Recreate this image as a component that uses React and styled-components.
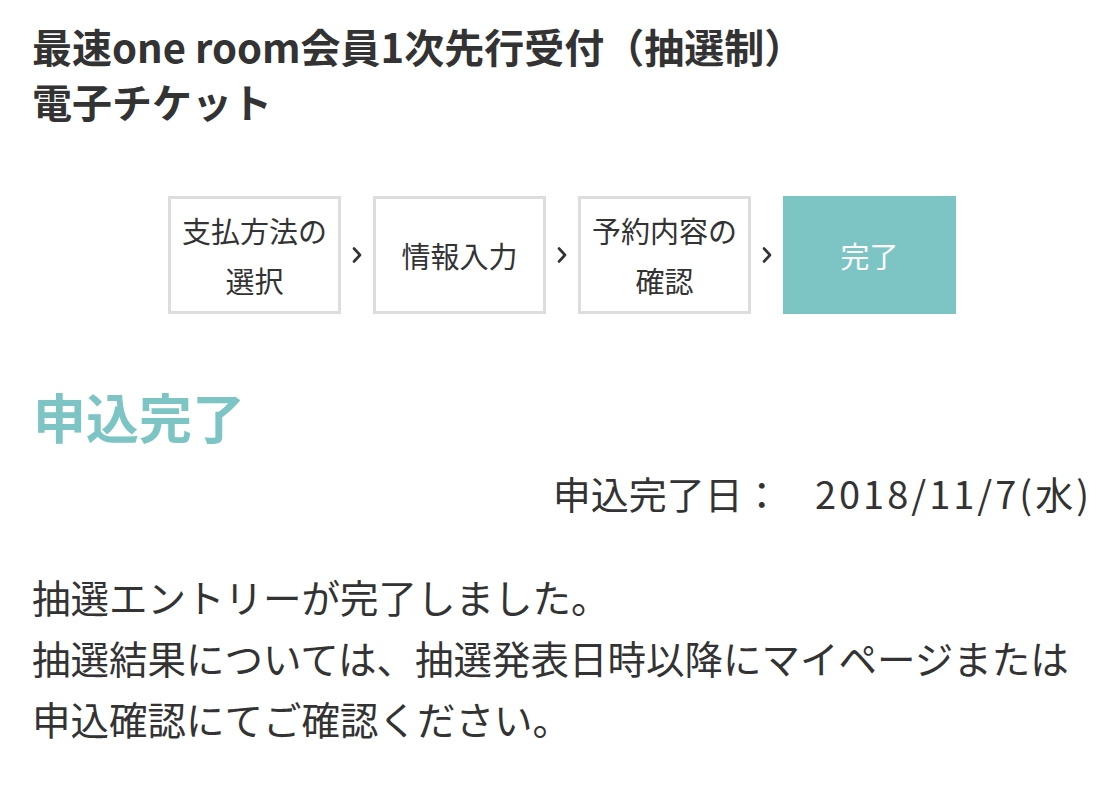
import React from "react";
import styled, { createGlobalStyle } from "styled-components";

const GlobalStyle = createGlobalStyle`
  body {
    margin: 0;
    background: #fff;
    color: #333;
    font-family: "Noto Sans CJK JP", "Noto Sans", sans-serif;
  }
`;

const Page = styled.div`
  padding: 19px 24px 40px 32px;
`;

const Title = styled.h1`
  margin: 0;
  font-size: 40px;
  font-weight: 700;
  line-height: 55px;
  color: #333;
`;

const Steps = styled.ol`
  list-style: none;
  margin: 67px 0 0;
  padding: 0;
  display: flex;
  justify-content: center;
  align-items: center;
`;

const Step = styled.li`
  box-sizing: border-box;
  width: 173px;
  height: 118px;
  border: 3px solid ${(p) => (p.$active ? "#7cc5c4" : "#dddddd")};
  background: ${(p) => (p.$active ? "#7cc5c4" : "#fff")};
  color: ${(p) => (p.$active ? "#fff" : "#333")};
  display: flex;
  align-items: center;
  justify-content: center;
  text-align: center;
  font-size: 29px;
  line-height: 50px;
`;

const Arrow = styled.span`
  width: 32px;
  display: flex;
  justify-content: center;
  align-items: center;
`;

const Heading = styled.h2`
  margin: 66px 0 0 1px;
  font-size: 53px;
  font-weight: 700;
  line-height: 72px;
  color: #7cc5c4;
`;

const DateRow = styled.p`
  margin: 15px 0 0;
  text-align: right;
  font-size: 38px;
  line-height: 52px;
  color: #333;
`;

const DateValue = styled.span`
  margin-left: 34px;
  letter-spacing: 3px;
`;

const Message = styled.p`
  margin: 47px 0 0;
  font-size: 38.5px;
  line-height: 61px;
  color: #333;
`;

const Chevron = () => (
  <svg width="12" height="18" viewBox="0 0 12 18">
    <path d="M3 2.5 L9 9 L3 15.5" fill="none" stroke="#333" strokeWidth="2.6" strokeLinecap="round" strokeLinejoin="round" />
  </svg>
);

const steps = [
  ["支払方法の", "選択"],
  ["情報入力"],
  ["予約内容の", "確認"],
  ["完了"],
];

export default function App() {
  return (
    <Page>
      <GlobalStyle />
      <Title>
        最速one room会員1次先行受付（抽選制）
        <br />
        電子チケット
      </Title>
      <Steps>
        {steps.map((lines, i) => (
          <React.Fragment key={i}>
            {i > 0 && (
              <Arrow>
                <Chevron />
              </Arrow>
            )}
            <Step $active={i === steps.length - 1}>
              <span>
                {lines.map((l, j) => (
                  <React.Fragment key={j}>
                    {j > 0 && <br />}
                    {l}
                  </React.Fragment>
                ))}
              </span>
            </Step>
          </React.Fragment>
        ))}
      </Steps>
      <Heading>申込完了</Heading>
      <DateRow>
        申込完了日：<DateValue>2018/11/7(水)</DateValue>
      </DateRow>
      <Message>
        抽選エントリーが完了しました。
        <br />
        抽選結果については、抽選発表日時以降にマイページまたは
        <br />
        申込確認にてご確認ください。
      </Message>
    </Page>
  );
}
